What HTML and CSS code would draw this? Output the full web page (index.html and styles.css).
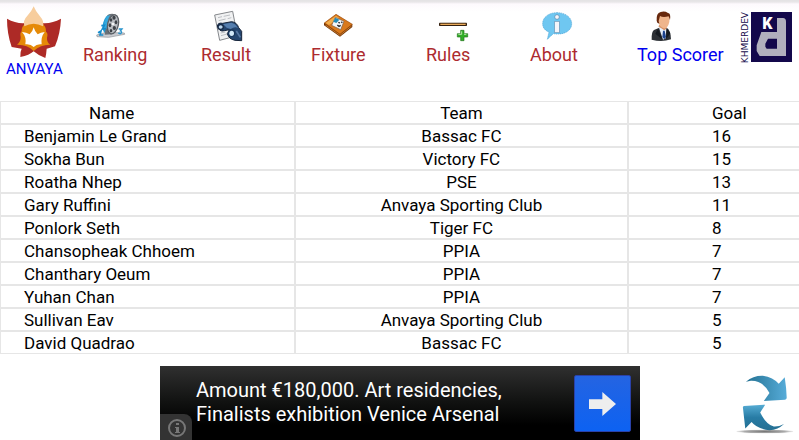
FILE: index.html
```html
<!DOCTYPE html>
<html lang="en">
<head>
  <meta charset="UTF-8" />
  <meta name="viewport" content="width=device-width, initial-scale=1" />
  <title>Top Scorer</title>
  <link rel="stylesheet" href="styles.css">
</head>
<body>

  <nav class="menu">
    <a class="home" href="#anvaya">
      <svg class="home-logo" viewBox="15 12 168 162" aria-hidden="true">
        <path fill="#ad2a26" d="M18 53 Q46 69 75 66 L122 66 Q151 69 180 53 Q178 98 162 136 L145 141 L137 143 Q136 158 133 171 Q111 163 98 151 Q85 163 58 168 Q57 152 62 143 L32 138 Q18 98 18 53Z"/>
        <path fill="#e58a08" d="M75 65 Q98 56 122 65 Q136 76 135 92 Q142 96 138 110 Q137 124 148 131 Q120 130 98 150 Q78 130 48 131 Q60 122 59 108 Q56 96 62 91 Q61 76 75 65Z"/>
        <path fill="#f7cd9d" d="M98 16 Q104 32 118 47 Q130 60 126 76 Q98 60 70 76 Q65 58 78 46 Q92 31 98 16Z"/>
        <path fill="#fff" d="M98 79 Q102 93 110 100 Q119 94 131 93 Q119 108 122 130 Q107 128 98 138 Q89 128 73 130 Q77 108 63 93 Q76 94 86 100 Q95 92 98 79Z"/>
      </svg>
      <span>ANVAYA</span>
    </a>
    <a class="item" href="#ranking">
      <svg class="icon" viewBox="0 0 90 96" aria-hidden="true">
        <path d="M2 72 L30 64 L85 66 L86 70 L38 79 L3 77Z" fill="#c9cbd0" stroke="#8e9299" stroke-width="2"/>
        <ellipse cx="36" cy="39" rx="15" ry="29" fill="#249bd4" transform="rotate(14 36 39)"/>
        <path d="M35 12 Q51 3 63 14 L47 70 L26 71Z" fill="#6b7177"/>
        <path d="M34 15 Q22 30 25 57 L35 50 Q33 27 43 12Z" fill="#36a9dd"/>
        <ellipse cx="51" cy="40" rx="16" ry="29" fill="#b9bdc2" stroke="#5b6066" stroke-width="4" transform="rotate(13 51 40)"/>
        <g fill="#3d4248">
          <ellipse cx="54" cy="20" rx="5" ry="6"/>
          <ellipse cx="60" cy="34" rx="4" ry="6"/>
          <ellipse cx="55" cy="51" rx="5" ry="6"/>
          <ellipse cx="45" cy="59" rx="4" ry="5"/>
          <ellipse cx="42" cy="43" rx="4" ry="6"/>
          <ellipse cx="45" cy="27" rx="4" ry="5"/>
        </g>
        <circle cx="51" cy="39" r="4" fill="#f3f5f6"/>
        <path d="M16 44 L25 43 L19 54 L30 53 M6 65 L15 60 L12 72 L22 72" fill="none" stroke="#158ccc" stroke-width="5"/>
        <path d="M68 54 L78 54 L73 60 Q81 63 73 68 L67 66" fill="none" stroke="#2794cd" stroke-width="4"/>
      </svg>
      <span>Ranking</span>
    </a>
    <a class="item" href="#result">
      <svg class="icon" viewBox="0 0 90 96" aria-hidden="true">
        <path d="M2 12 L56 1 L70 74 L17 88Z" fill="#f1f2f3" stroke="#85888c" stroke-width="3"/>
        <path d="M12 20 L24 17 M29 16 L48 12 M14 29 L35 24 M41 23 L52 20 M20 66 L34 63 M21 74 L39 69" stroke="#a0a5ab" stroke-width="2"/>
        <path d="M10 45 Q12 34 26 37 L53 32 Q69 34 74 50 L83 61 L83 89 L63 88 Q44 84 40 68 L46 56 L31 59 Q16 64 10 45Z" fill="#25466f" stroke="#17253b" stroke-width="3"/>
        <path d="M27 39 L52 35 Q65 38 72 51 Q62 46 50 54 L38 50Z" fill="#557eae"/>
        <ellipse cx="20" cy="48" rx="8" ry="7" fill="#bcd7ef" stroke="#162944" stroke-width="4"/>
        <circle cx="53" cy="66" r="11" fill="#19365a"/>
        <ellipse cx="53" cy="67" rx="7" ry="8" fill="#d3e9f8"/>
        <path d="M67 60 L79 79" stroke="#597aa4" stroke-width="5"/>
      </svg>
      <span>Result</span>
    </a>
    <a class="item" href="#fixture">
      <svg class="icon" viewBox="0 0 90 96" aria-hidden="true">
        <path d="M0 36 L0 43 L48 77 L85 48 L85 40Z" fill="#6d3207"/>
        <path d="M1 36 L36 10 L85 40 L48 70Z" fill="#d9791c" stroke="#9a4908" stroke-width="2"/>
        <path d="M5 36 L36 14 L45 20 L15 42Z" fill="#f1ae4d"/>
        <path d="M4 42 L48 73 L83 45" fill="none" stroke="#c97a2a" stroke-width="3"/>
        <path d="M23 43 L34 19 L60 31 L50 56Z" fill="#f4f5f7" stroke="#765a45" stroke-width="2"/>
        <path d="M34 20 L46 26 L37 36 L28 32Z" fill="#248cb7"/>
        <path d="M43 34 L48 36 M52 32 L55 35 M40 42 L45 46 L50 43" stroke="#24272b" stroke-width="4" fill="none"/>
      </svg>
      <span>Fixture</span>
    </a>
    <a class="item" href="#rules">
      <svg class="icon" viewBox="0 0 90 96" aria-hidden="true">
        <rect x="0" y="35" width="84" height="10" rx="2" fill="#35200e"/>
        <path d="M4 40 H80" stroke="#e9aa5a" stroke-width="4"/>
        <path d="M65 58 H75 V68 H86 V78 H75 V89 H65 V78 H55 V68 H65Z" fill="#31ad27" stroke="#24741d" stroke-width="2"/>
        <path d="M68 61 V70 H58 M75 70 H82" fill="none" stroke="#b6e7a8" stroke-width="3"/>
      </svg>
      <span>Rules</span>
    </a>
    <a class="item" href="#about">
      <svg class="icon" viewBox="0 0 90 96" aria-hidden="true">
        <path d="M42 5 C68 5 86 20 86 38 C86 58 67 70 40 69 L31 68 L13 85 L18 63 C5 58 -1 49 -1 38 C-1 19 17 5 42 5Z" fill="#6fc7f1" stroke="#4aa1d4" stroke-width="2" stroke-dasharray="4 2"/>
        <circle cx="42" cy="18" r="7" fill="#f5f5fa" stroke="#5484aa" stroke-width="2"/>
        <rect x="35" y="31" width="14" height="34" fill="#f5f5fa" stroke="#6d95b6" stroke-width="2"/>
      </svg>
      <span>About</span>
    </a>
    <a class="item current" href="#top-scorer" aria-current="page">
      <svg class="icon" viewBox="0 0 90 96" aria-hidden="true">
        <path d="M5 86 Q4 62 12 57 L28 50 L51 51 Q62 57 63 85 Q35 94 5 86Z" fill="#2c3035"/>
        <path d="M27 50 L49 51 L47 82 L39 86Z" fill="#e6eef9"/>
        <path d="M39 59 L44 59 L48 78 L43 85 L37 78Z" fill="#1c438e"/>
        <path d="M25 46 L31 39 H49 L50 52 L43 58Z" fill="#d79062"/>
        <path d="M24 14 Q42 2 57 15 Q62 33 51 49 Q42 57 31 46 Q23 33 24 14Z" fill="#efb58c"/>
        <path d="M20 29 Q18 7 32 3 Q44 -1 54 6 Q63 6 60 27 L56 16 Q39 21 30 15 L26 30 L28 38 L22 35Z" fill="#68290d"/>
        <path d="M24 53 L38 86 L16 68Z M51 54 L48 85 L61 67Z" fill="#151a20"/>
      </svg>
      <span>Top Scorer</span>
    </a>
    <a class="brand" href="#khmerdev">
      <span class="brand-name">KHMERDEV</span>
      <svg class="brand-logo" viewBox="0 0 123 150" aria-hidden="true">
        <rect width="123" height="150" fill="#13084b"/>
        <path fill="#b1b0bd" fill-rule="evenodd" d="M78 18 H96 Q105 18 105 29 V132 H26 L17 117 V100 L31 60 H78Z M51 80 L43 95 V104 L47 110 H78 V80Z"/>
        <rect x="34" y="17" width="44" height="35" fill="#13084b"/>
        <text class="brand-letter" x="34" y="51">K</text>
      </svg>
    </a>
  </nav>

  <table class="scores">
    <thead>
      <tr><th class="name">Name</th><th class="team">Team</th><th class="goal">Goal</th></tr>
    </thead>
    <tbody>
      <tr><td>Benjamin Le Grand</td><td>Bassac FC</td><td>16</td></tr>
      <tr><td>Sokha Bun</td><td>Victory FC</td><td>15</td></tr>
      <tr><td>Roatha Nhep</td><td>PSE</td><td>13</td></tr>
      <tr><td>Gary Ruffini</td><td>Anvaya Sporting Club</td><td>11</td></tr>
      <tr><td>Ponlork Seth</td><td>Tiger FC</td><td>8</td></tr>
      <tr><td>Chansopheak Chhoem</td><td>PPIA</td><td>7</td></tr>
      <tr><td>Chanthary Oeum</td><td>PPIA</td><td>7</td></tr>
      <tr><td>Yuhan Chan</td><td>PPIA</td><td>7</td></tr>
      <tr><td>Sullivan Eav</td><td>Anvaya Sporting Club</td><td>5</td></tr>
      <tr><td>David Quadrao</td><td>Bassac FC</td><td>5</td></tr>
    </tbody>
  </table>

  <footer class="bottom">
    <div class="ad">
      <button class="ad-info" aria-label="About this ad">
        <svg viewBox="0 0 20 20" aria-hidden="true">
          <circle cx="10" cy="10" r="8" fill="none" stroke="#777" stroke-width="2"/>
          <path d="M9 5h3v2H9z M8 9h4v5h1v1H8v-1h1v-4H8z" fill="#777"/>
        </svg>
      </button>
      <p>Amount €180,000. Art residencies, Finalists exhibition Venice Arsenal</p>
      <a class="ad-go" href="#ad" aria-label="Open ad">
        <svg viewBox="0 0 81 72" aria-hidden="true">
          <path d="M0 22 H40 V0 L81 36 L40 72 V51 H0Z" fill="#eee"/>
        </svg>
      </a>
    </div>
    <button class="refresh" aria-label="Refresh">
      <svg viewBox="555 72 175 180" aria-hidden="true">
        <defs>
          <linearGradient id="down" x1="0" x2="1"><stop stop-color="#247293"/><stop offset="1" stop-color="#57acd9"/></linearGradient>
          <linearGradient id="up" x1="0" x2="0" y1="0" y2="1"><stop stop-color="#56acd4"/><stop offset=".5" stop-color="#287ca5"/><stop offset="1" stop-color="#256f92"/></linearGradient>
          <radialGradient id="shade"><stop stop-color="#777"/><stop offset=".7" stop-color="#aaa"/><stop offset="1" stop-color="#eee"/></radialGradient>
        </defs>
        <ellipse cx="642" cy="245" rx="86" ry="6" fill="url(#shade)"/>
        <path fill="url(#down)" d="M585 95 Q608 76 636 77 Q667 82 684 101 L702 81 Q707 112 708 143 Q708 148 703 149 L639 153 L656 129 Q637 91 600 92Z"/>
        <path fill="url(#up)" d="M579 168 L643 164 L628 188 Q646 224 669 230 Q684 231 700 222 Q682 239 656 241 Q619 237 602 216 L583 236 L576 174 Q575 169 579 168Z"/>
      </svg>
    </button>
  </footer>

</body>
</html>
```
FILE: styles.css
```css
* { box-sizing: border-box; }
body {
  margin: 0;
  background-color: white;
  color: black;
  font-family: Roboto, sans-serif;
  font-size: 17px;
}
a { text-decoration: none; }
svg { display: block; overflow: visible; }
button {
  padding: 0;
  border: none;
  background: none;
  cursor: pointer;
}

/* top menu */
.menu {
  display: grid;
  grid-template-columns: 83fr 118fr 110fr 115fr 104fr 107fr 104fr 58fr;
  align-items: start;
  padding-bottom: 22px;
  background: linear-gradient(#e3e2e4, #e8e6e8 2px, #fdf9fd 4px, white 12px);
}
.home {
  padding: 5px 0 0 6px;
  color: #0000f0;
  font-size: 15px;
  line-height: 20px;
}
.home-logo { width: 56px; height: 54px; }
.item {
  padding-top: 11px;
  color: #ad2b2f;
  font-size: 18px;
  line-height: 24px;
  white-space: nowrap;
}
.item.current { color: #0000f0; }
.icon {
  width: 30px;
  height: 32px;
  margin-left: 13px;
}
.brand {
  display: flex;
  gap: 2px;
  padding-top: 12px;
  color: #13084b;
}
.brand-name {
  width: 8px;
  font-family: "DejaVu Sans", sans-serif;
  font-size: 9px;
  line-height: 8px;
  writing-mode: vertical-rl;
  transform: rotate(180deg);
}
.brand-logo { width: 41px; height: 50px; }
.brand-letter {
  fill: white;
  font-size: 48px;
  font-weight: 900;
}

/* scorers */
.scores {
  width: 100%;
  border-collapse: separate;
  border-spacing: 0;
  table-layout: fixed;
  line-height: 19px;
}
.scores th, .scores td {
  padding: 2px 0 0;
  border: 1px solid #e6e6e6;
  font-weight: normal;
  text-align: left;
}
.scores td:first-child { padding-left: 23px; }
.scores .name { width: 36.9%; padding-left: 88px; }
.scores .team { width: 41.7%; }
.scores th:nth-child(2), .scores td:nth-child(2) { text-align: center; }
.scores th:last-child, .scores td:last-child {
  padding-left: 83px;
  border-right: none;
}

/* ad and refresh */
.bottom {
  display: grid;
  grid-template-columns: 160fr 480fr 159fr;
  margin-top: 12px;
}
.ad {
  grid-column: 2;
  display: flex;
  align-items: flex-start;
  height: 74px;
  padding-right: 9px;
  background: linear-gradient(#303030, #101110 50%, black 80%);
  color: white;
}
.ad p {
  flex: 1;
  margin: 0;
  padding: 12px 20px 0 4px;
  font-size: 20px;
  line-height: 24px;
}
.ad-info {
  align-self: flex-end;
  width: 32px;
  height: 26px;
  padding: 2px 0 0 7px;
  border-radius: 0 8px 0 0;
  background-color: #333;
}
.ad-info svg { width: 20px; height: 20px; }
.ad-go {
  display: flex;
  align-items: center;
  justify-content: center;
  width: 57px;
  height: 57px;
  margin-top: 9px;
  border: 1px solid #2a41a8;
  border-radius: 2px;
  background: linear-gradient(#2464e2, #0d62f2);
}
.ad-go svg { width: 27px; height: 24px; }
.refresh {
  justify-self: end;
  align-self: start;
  margin: 8px 5px 0 0;
}
.refresh svg { width: 58px; height: 60px; }
```
